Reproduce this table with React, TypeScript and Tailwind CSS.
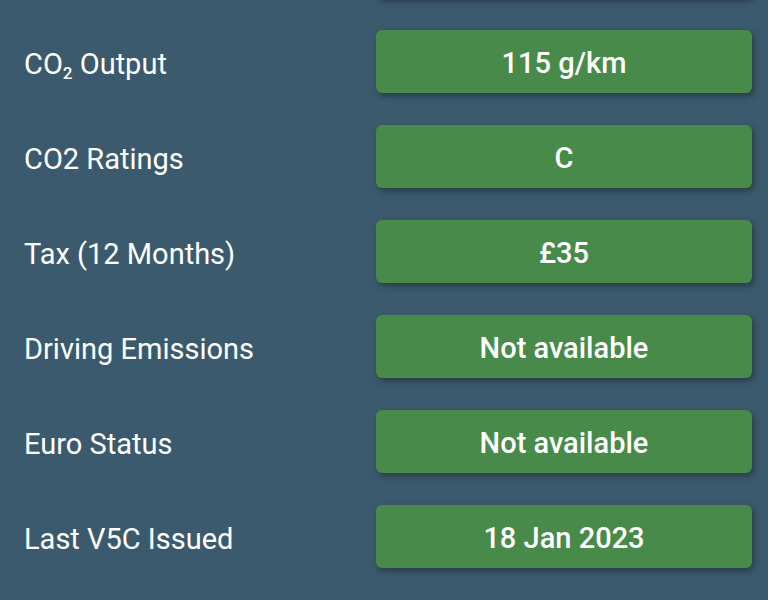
const rows: { label: React.ReactNode; value: string }[] = [
  {
    label: (
      <>
        CO<sub className="text-[17px] align-baseline relative top-[5px] font-medium">2</sub> Output
      </>
    ),
    value: "115 g/km",
  },
  { label: "CO2 Ratings", value: "C" },
  { label: "Tax (12 Months)", value: "£35" },
  { label: "Driving Emissions", value: "Not available" },
  { label: "Euro Status", value: "Not available" },
  { label: "Last V5C Issued", value: "18 Jan 2023" },
];

function App() {
  return (
    <div
      className="w-[768px] h-[600px] overflow-hidden bg-[#3c5a6d] text-white"
      style={{ fontFamily: "Roboto, 'Liberation Sans', sans-serif" }}
    >
      <div className="flex flex-col gap-[32px] pl-6 pr-4">
        {/* tail of the previous row, scrolled off the top */}
        <div className="flex items-center -mt-[65px]">
          <div className="w-[352px]" />
          <div className="flex-1 h-[63px] rounded-md bg-[#478a49] shadow-[2px_3px_6px_rgba(0,0,0,0.35)]" />
        </div>
        {rows.map((row, i) => (
          <div key={i} className="flex items-center">
            <div className="w-[352px] text-[29px] leading-none pt-[5px]">{row.label}</div>
            <div className="flex-1 h-[63px] rounded-md bg-[#478a49] shadow-[2px_3px_6px_rgba(0,0,0,0.35)] flex items-center justify-center text-[29px] font-medium pt-[5px]">
              {row.value}
            </div>
          </div>
        ))}
      </div>
    </div>
  );
}

export default App;
